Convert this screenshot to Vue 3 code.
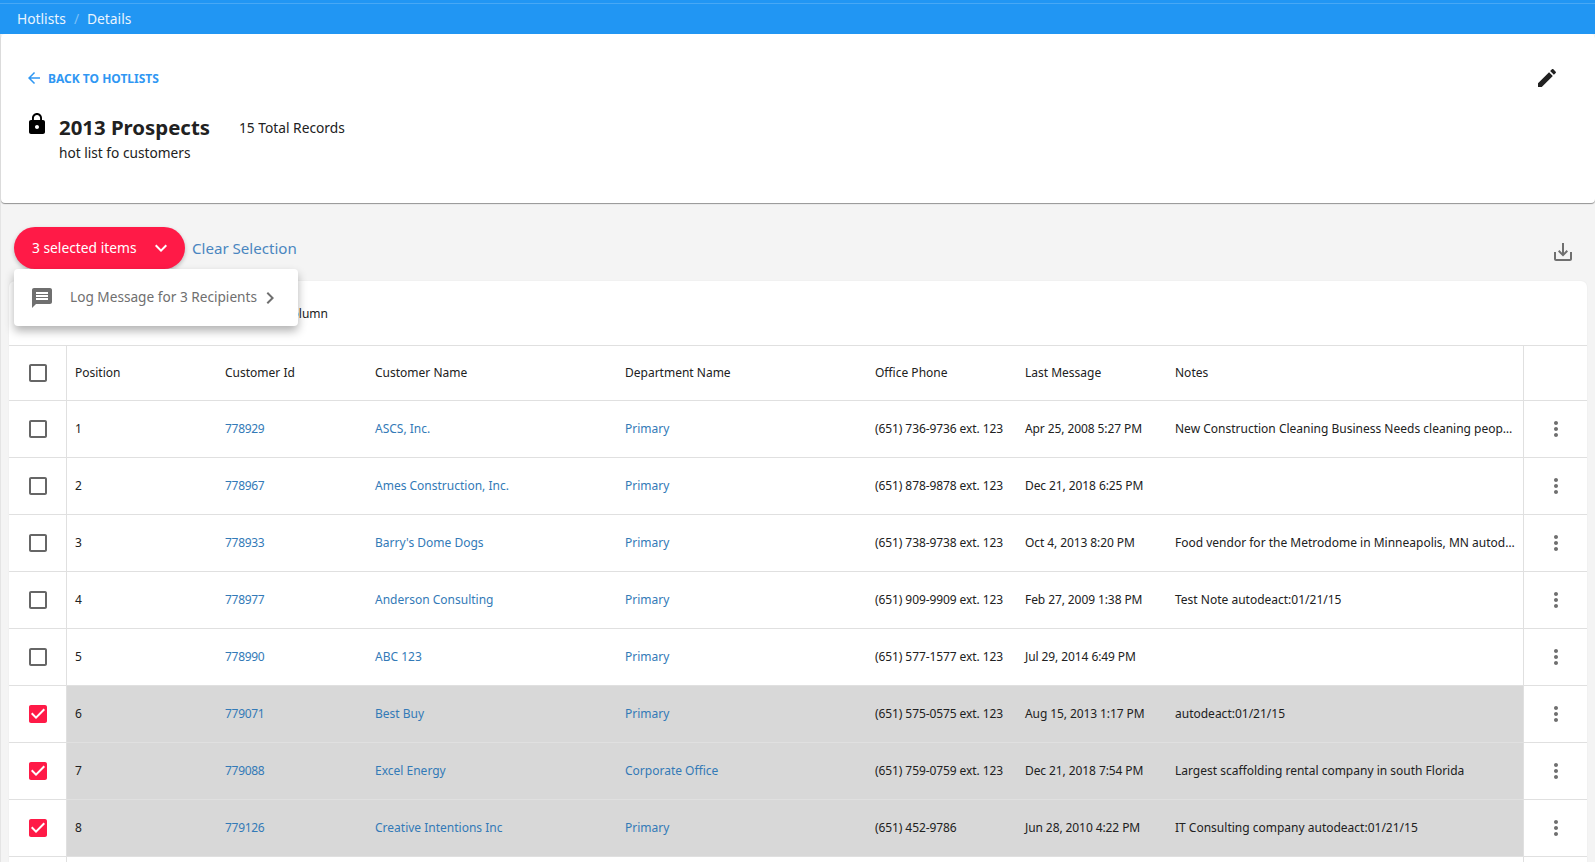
<script setup>
const icons = {
  back: 'M20 11H7.83l5.59-5.59L12 4l-8 8 8 8 1.41-1.41L7.83 13H20v-2z',
  lock: 'M18 8h-1V6c0-2.76-2.24-5-5-5S7 3.24 7 6v2H6c-1.1 0-2 .9-2 2v10c0 1.1.9 2 2 2h12c1.1 0 2-.9 2-2V10c0-1.1-.9-2-2-2zm-6 9c-1.1 0-2-.9-2-2s.9-2 2-2 2 .9 2 2-.9 2-2 2zm3.1-9H8.9V6c0-1.71 1.39-3.1 3.1-3.1 1.71 0 3.1 1.39 3.1 3.1v2z',
  edit: 'M3 17.25V21h3.75L17.81 9.94l-3.75-3.75L3 17.25zM20.71 7.04c.39-.39.39-1.02 0-1.41l-2.34-2.34c-.39-.39-1.02-.39-1.41 0l-1.83 1.83 3.75 3.75 1.83-1.83z',
  down: 'M7.41 8.59L12 13.17l4.59-4.58L18 10l-6 6-6-6 1.41-1.41z',
  right: 'M10 6L8.59 7.41 13.17 12l-4.58 4.59L10 18l6-6z',
  message: 'M20 2H4c-1.1 0-1.99.9-1.99 2L2 22l4-4h14c1.1 0 2-.9 2-2V4c0-1.1-.9-2-2-2zm-2 12H6v-2h12v2zm0-3H6V9h12v2zm0-3H6V6h12v2z',
  more: 'M12 8c1.1 0 2-.9 2-2s-.9-2-2-2-2 .9-2 2 .9 2 2 2zm0 2c-1.1 0-2 .9-2 2s.9 2 2 2 2-.9 2-2-.9-2-2-2zm0 6c-1.1 0-2 .9-2 2s.9 2 2 2 2-.9 2-2-.9-2-2-2z',
  checked: 'M19 3H5c-1.11 0-2 .9-2 2v14c0 1.1.89 2 2 2h14c1.11 0 2-.9 2-2V5c0-1.1-.89-2-2-2zm-9 14l-5-5 1.41-1.41L10 14.17l7.59-7.59L19 8l-9 9z',
  unchecked: 'M19 5v14H5V5h14m0-2H5c-1.1 0-2 .9-2 2v14c0 1.1.9 2 2 2h14c1.1 0 2-.9 2-2V5c0-1.1-.9-2-2-2z',
  save: 'M19 12v7H5v-7H3v7c0 1.1.9 2 2 2h14c1.1 0 2-.9 2-2v-7h-2zm-6 .67l2.59-2.58L17 11.5l-5 5-5-5 1.41-1.41L11 12.67V3h2v9.67z'
}
const headers = ['Position', 'Customer Id', 'Customer Name', 'Department Name', 'Office Phone', 'Last Message', 'Notes']
const rows = [
  { pos: '1', id: '778929', name: 'ASCS, Inc.', dept: 'Primary', phone: '(651) 736-9736 ext. 123', msg: 'Apr 25, 2008 5:27 PM', notes: 'New Construction Cleaning Business Needs cleaning people autodeact:01/21/15' },
  { pos: '2', id: '778967', name: 'Ames Construction, Inc.', dept: 'Primary', phone: '(651) 878-9878 ext. 123', msg: 'Dec 21, 2018 6:25 PM', notes: '' },
  { pos: '3', id: '778933', name: "Barry's Dome Dogs", dept: 'Primary', phone: '(651) 738-9738 ext. 123', msg: 'Oct 4, 2013 8:20 PM', notes: 'Food vendor for the Metrodome in Minneapolis, MN autodeact:01/21/15' },
  { pos: '4', id: '778977', name: 'Anderson Consulting', dept: 'Primary', phone: '(651) 909-9909 ext. 123', msg: 'Feb 27, 2009 1:38 PM', notes: 'Test Note autodeact:01/21/15' },
  { pos: '5', id: '778990', name: 'ABC 123', dept: 'Primary', phone: '(651) 577-1577 ext. 123', msg: 'Jul 29, 2014 6:49 PM', notes: '' },
  { pos: '6', id: '779071', name: 'Best Buy', dept: 'Primary', phone: '(651) 575-0575 ext. 123', msg: 'Aug 15, 2013 1:17 PM', notes: 'autodeact:01/21/15', sel: true },
  { pos: '7', id: '779088', name: 'Excel Energy', dept: 'Corporate Office', phone: '(651) 759-0759 ext. 123', msg: 'Dec 21, 2018 7:54 PM', notes: 'Largest scaffolding rental company in south Florida', sel: true },
  { pos: '8', id: '779126', name: 'Creative Intentions Inc', dept: 'Primary', phone: '(651) 452-9786', msg: 'Jun 28, 2010 4:22 PM', notes: 'IT Consulting company autodeact:01/21/15', sel: true }
]
</script>

<template>
  <div class="page">
    <nav class="crumbs">
      <span>Hotlists</span>
      <span class="sep">/</span>
      <span>Details</span>
    </nav>

    <section class="summary">
      <div class="summary-top">
        <a class="back">
          <svg class="back-icon" viewBox="0 0 24 24"><path :d="icons.back" /></svg>
          BACK TO HOTLISTS
        </a>
        <svg class="edit" viewBox="0 0 24 24"><path :d="icons.edit" /></svg>
      </div>
      <div class="summary-main">
        <svg class="lock" viewBox="0 0 24 24"><path :d="icons.lock" /></svg>
        <div>
          <div class="title-line">
            <h1>2013 Prospects</h1>
            <span class="total">15 Total Records</span>
          </div>
          <div class="desc">hot list fo customers</div>
        </div>
      </div>
    </section>

    <div class="actions">
      <div class="actions-left">
        <button class="selected-btn">
          <span class="btn-label">3 selected items</span>
          <svg viewBox="0 0 24 24"><path :d="icons.down" /></svg>
        </button>
        <a class="clear">Clear Selection</a>
      </div>
      <svg class="save" viewBox="0 0 24 24"><path :d="icons.save" /></svg>
      <div class="menu">
        <svg class="menu-msg" viewBox="0 0 24 24"><path :d="icons.message" /></svg>
        <span class="menu-label">Log Message for 3 Recipients</span>
        <svg class="menu-arrow" viewBox="0 0 24 24"><path :d="icons.right" /></svg>
      </div>
    </div>

    <section class="table-card">
      <div class="toolbar">Add or Remove Column</div>
      <div class="row head">
        <div class="cell-check">
          <svg class="box" viewBox="0 0 24 24"><path :d="icons.unchecked" /></svg>
        </div>
        <div class="data">
          <div v-for="h in headers" :key="h" class="cell">{{ h }}</div>
        </div>
        <div class="cell-more"></div>
      </div>
      <div v-for="r in rows" :key="r.pos" class="row" :class="{ selected: r.sel }">
        <div class="cell-check">
          <svg class="box" :class="{ on: r.sel }" viewBox="0 0 24 24"><path :d="r.sel ? icons.checked : icons.unchecked" /></svg>
        </div>
        <div class="data">
          <div class="cell">{{ r.pos }}</div>
          <div class="cell link id">{{ r.id }}</div>
          <div class="cell link">{{ r.name }}</div>
          <div class="cell link">{{ r.dept }}</div>
          <div class="cell tight">{{ r.phone }}</div>
          <div class="cell tight">{{ r.msg }}</div>
          <div class="cell">{{ r.notes }}</div>
        </div>
        <div class="cell-more">
          <svg class="more" viewBox="0 0 24 24"><path :d="icons.more" /></svg>
        </div>
      </div>
      <div class="row">
        <div class="cell-check"></div>
        <div class="data"></div>
        <div class="cell-more"></div>
      </div>
    </section>
  </div>
</template>

<style>
html, body { margin: 0; overflow: hidden; }
</style>

<style scoped>
.page {
  width: 1595px;
  height: 862px;
  overflow: hidden;
  background: #f4f4f4;
  box-shadow: inset 1px 0 #e4e4e4;
  font-family: "Noto Sans", "Open Sans", sans-serif;
  color: #212121;
  box-sizing: border-box;
}
svg { display: block; fill: currentColor; flex: none; }

.crumbs {
  height: 34px;
  box-sizing: border-box;
  padding: 3px 17px 0;
  display: flex;
  align-items: center;
  gap: 8px;
  background: linear-gradient(#2196f3 3px, #47a8f5 3px, #47a8f5 4px, #2196f3 4px);
  color: #e9f4fe;
  font-size: 13.8px;
}
.sep { color: #7cc0f8; }

.summary {
  height: 169px;
  margin-left: 1px;
  box-sizing: border-box;
  background: #fff;
  border-radius: 4px;
  box-shadow: 0 1px 1px rgba(0, 0, 0, .4);
  padding: 32px 27px 0;
}
.summary-top {
  display: flex;
  justify-content: space-between;
  align-items: center;
  height: 24px;
  padding-right: 9px;
}
.back {
  display: flex;
  align-items: center;
  gap: 5px;
  color: #2f97f3;
  font-size: 12px;
  font-weight: 700;
  margin-left: -3px;
}
.back-icon { width: 18px; height: 18px; }
.edit { width: 24px; height: 24px; color: #212121; }

.summary-main {
  display: flex;
  gap: 10px;
  margin-top: 22px;
  margin-left: -3px;
}
.lock { width: 24px; height: 24px; color: #000; }
.title-line { display: flex; align-items: center; gap: 30px; height: 30px; }
h1 { margin: 0; font-size: 20.4px; font-weight: 700; line-height: 30px; width: 150px; white-space: nowrap; }
.total { font-size: 13.75px; }
.desc { font-size: 13.7px; line-height: 20px; margin-top: 1px; }

.actions {
  position: relative;
  height: 78px;
  box-sizing: border-box;
  padding: 24px 20px 0 14px;
  display: flex;
  justify-content: space-between;
  align-items: flex-start;
}
.actions-left { display: flex; align-items: center; gap: 7px; }
.selected-btn {
  width: 171px;
  height: 42px;
  border: 0;
  border-radius: 21px;
  background: #ff1a47;
  color: #fff;
  font: inherit;
  font-size: 13.8px;
  display: flex;
  align-items: center;
  justify-content: space-between;
  padding: 0 12px 0 18px;
  box-shadow: 0 2px 4px rgba(0, 0, 0, .25);
}
.btn-label { position: relative; top: -1px; }
.selected-btn svg { width: 24px; height: 24px; }
.clear { color: #4a86c0; font-size: 15.1px; }
.save { width: 24px; height: 24px; color: #6f6f6f; margin-top: 13px; }

.menu {
  position: absolute;
  left: 14px;
  top: 66px;
  width: 284px;
  height: 57px;
  z-index: 2;
  background: #fff;
  border-radius: 4px;
  box-shadow: 0 5px 10px rgba(0, 0, 0, .3);
  display: flex;
  align-items: center;
  color: #6f6f6f;
  padding-left: 16px;
  box-sizing: border-box;
}
.menu-msg { width: 24px; height: 24px; }
.menu-label { font-size: 13.65px; margin-left: 16px; white-space: nowrap; padding-bottom: 2px; }
.menu-arrow { width: 24px; height: 24px; margin-left: 1px; }

.table-card {
  margin: 0 8px 0 9px;
  background: #fff;
  border-radius: 6px 6px 0 0;
  box-shadow: 0 0 2px rgba(0, 0, 0, .06);
}
.toolbar {
  height: 65px;
  display: flex;
  align-items: center;
  justify-content: flex-end;
  font-size: 12px;
  padding-right: 1259px;
  box-sizing: border-box;
  border-bottom: 1px solid #e0e0e0;
  white-space: nowrap;
}
.row {
  display: flex;
  height: 57px;
  box-sizing: border-box;
  border-bottom: 1px solid #e0e0e0;
  font-size: 12px;
}
.row.head { height: 55px; }
.cell-check {
  width: 58px;
  flex: none;
  display: flex;
  align-items: center;
  justify-content: center;
  border-right: 1px solid #e0e0e0;
  box-sizing: border-box;
}
.box { width: 24px; height: 24px; color: #666; }
.box.on { color: #ff1a47; }
.data {
  flex: 1;
  min-width: 0;
  display: grid;
  grid-template-columns: 150px 150px 250px 250px 150px 150px 356px;
  align-items: center;
  height: 100%;
  box-sizing: border-box;
  padding-bottom: 2px;
}
.row.selected .data { background: #d8d8d8; }
.cell {
  padding: 0 8px;
  white-space: nowrap;
  overflow: hidden;
  text-overflow: ellipsis;
  box-sizing: border-box;
}
.link { color: #337ab7; }
.id { letter-spacing: -.3px; }
.tight { letter-spacing: -.09px; }
.cell-more {
  flex: none;
  width: 64px;
  border-left: 1px solid #e0e0e0;
  box-sizing: border-box;
  display: flex;
  align-items: center;
  justify-content: center;
}
.more { width: 24px; height: 24px; color: #6f6f6f; }
</style>
